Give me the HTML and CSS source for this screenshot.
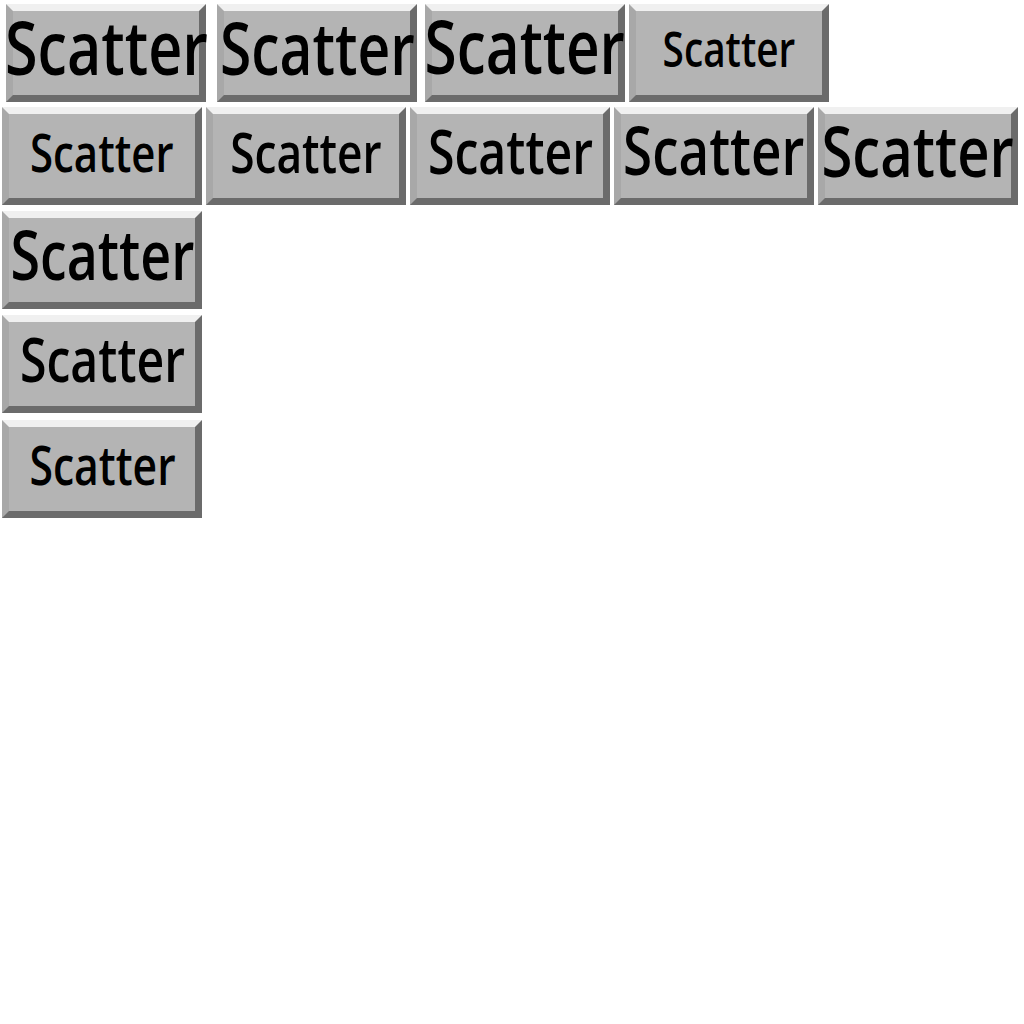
FILE: index.html
```html
<!DOCTYPE html>
<html>
<head>
<meta name="viewport" content="width=device-width, initial-scale=1">
<title>Scatter buttons</title>
<link rel="stylesheet" href="styles.css">
</head>
<body>
<div class="board">
  <div class="row top">
    <button class="btn s75"><span class="label">Scatter</span></button>
    <button class="btn s72 gap11"><span class="label">Scatter</span></button>
    <button class="btn s74 gap8"><span class="label">Scatter</span></button>
    <button class="btn s49 gap4"><span class="label">Scatter</span></button>
  </div>
  <div class="row">
    <button class="btn s53"><span class="label">Scatter</span></button>
    <button class="btn s56"><span class="label">Scatter</span></button>
    <button class="btn s61"><span class="label">Scatter</span></button>
    <button class="btn s67"><span class="label">Scatter</span></button>
    <button class="btn s71"><span class="label">Scatter</span></button>
  </div>
  <div class="row">
    <button class="btn s68"><span class="label">Scatter</span></button>
  </div>
  <div class="row">
    <button class="btn s61"><span class="label">Scatter</span></button>
  </div>
  <div class="row last">
    <button class="btn s54"><span class="label">Scatter</span></button>
  </div>
</div>
</body>
</html>
```

FILE: styles.css
```css
body {
  margin: 0;
  background: #fff;
}

.board {
  display: flex;
  flex-direction: column;
  gap: 6px;
  padding: 4px 0 0 2px;
}

.row {
  display: flex;
  gap: 4px;
}

.row.top {
  gap: 0;
  margin-left: 4px;
  margin-bottom: -1px;
}

.row.last {
  margin-top: 1px;
}

.btn {
  width: 200px;
  height: 98px;
  padding: 0 0 0.18em;
  margin: 0;
  box-sizing: border-box;
  background: #b4b4b4;
  color: #000;
  font-family: "Open Sans", "Noto Sans", sans-serif;
  font-weight: 600;
  line-height: 1;
  white-space: nowrap;
  display: flex;
  align-items: center;
  justify-content: center;
  border-style: solid;
  border-width: 7px;
  border-top-color: #f0f0f0;
  border-left-color: #a8a8a8;
  border-right-color: #6b6b6b;
  border-bottom-color: #6b6b6b;
}

/* the face is narrower than any installed width, so squeeze it */
.label {
  display: inline-block;
  transform: scaleX(0.79);
}

.row .gap11 { margin-left: 11px; }
.row .gap8 { margin-left: 8px; }
.row .gap4 { margin-left: 4px; }

.s49 { font-size: 49px; }
.s53 { font-size: 53px; }
.s54 { font-size: 54px; }
.s56 { font-size: 56px; }
.s61 { font-size: 61px; }
.s67 { font-size: 67px; }
.s68 { font-size: 68px; }
.s71 { font-size: 71px; }
.s72 { font-size: 72px; }
.s74 { font-size: 74px; }
.s75 { font-size: 75px; }
```
